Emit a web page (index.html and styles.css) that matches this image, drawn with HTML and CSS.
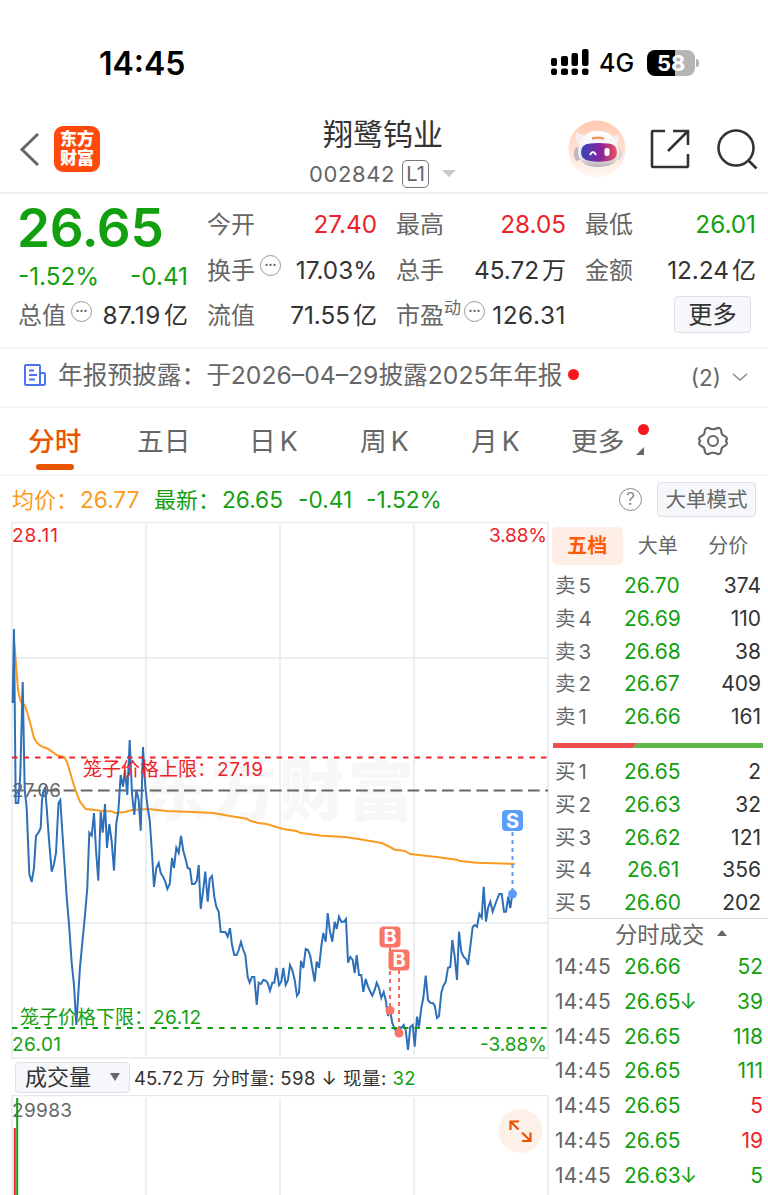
FILE: index.html
```html
<!DOCTYPE html>
<html lang="zh-CN">
<head>
    <meta charset="UTF-8">
    <title>翔鹭钨业</title>
    <link rel="stylesheet" href="styles.css">
</head>
<body>
    <!-- status bar -->
    <div class="status">
        <div class="clock">14:45</div>
        <svg class="signal" width="38" height="28" viewBox="0 0 38 28">
            <rect x="0" y="9" width="6" height="8" rx="2"/><rect x="10" y="7" width="7" height="10" rx="2"/><rect x="20.500" y="4" width="6.500" height="13" rx="2"/><rect x="31" y="0" width="6.500" height="17" rx="2"/>
            <rect x="0" y="19.500" width="6" height="6.500" rx="2"/><rect x="10" y="19.500" width="7" height="6.500" rx="2"/><rect x="20.500" y="19.500" width="6.500" height="6.500" rx="2"/><rect x="31" y="19.500" width="6.500" height="6.500" rx="2"/>
        </svg>
        <div class="net">4G</div>
        <div class="battery">58</div>
        <div class="battery-tip"></div>
    </div>

    <!-- header -->
    <div class="header">
        <svg class="back" width="22" height="36" viewBox="0 0 22 36"><path d="M20 3L4 18.500L20 34" fill="none" stroke="#666" stroke-width="3"/></svg>
        <div class="logo">东方<br>财富</div>
        <div class="stock">
            <div class="name">翔鹭钨业</div>
            <div class="code"><span>002842</span><span class="level">L1</span><i class="down"></i></div>
        </div>
        <svg class="robot" width="58" height="58" viewBox="0 0 58 58">
            <defs>
                <linearGradient id="skin" x1="0" y1="0" x2="0" y2="1"><stop offset="0" stop-color="#ffc9ae"/><stop offset="1" stop-color="#fff8f4"/></linearGradient>
                <linearGradient id="visor" x1="0" y1="0" x2="1" y2="0"><stop offset="0" stop-color="#3645b8"/><stop offset=".55" stop-color="#8a239a"/><stop offset="1" stop-color="#ef5360"/></linearGradient>
                <linearGradient id="helmet" x1="0" y1="0" x2="0" y2="1"><stop offset="0" stop-color="#fff"/><stop offset=".7" stop-color="#eeebed"/><stop offset="1" stop-color="#b9b0b6"/></linearGradient>
            </defs>
            <circle cx="29" cy="29" r="28.500" fill="url(#skin)"/>
            <ellipse cx="9.500" cy="34" rx="3.500" ry="7" fill="#bdb7be"/>
            <ellipse cx="51" cy="34" rx="3" ry="6" fill="#dcd6da"/>
            <path d="M8 11Q6 19 11 25L19 15Q11 16 8 11ZM50 13Q52 20 48 26L41 16Q48 18 50 13Z" fill="#f4eef0"/>
            <path d="M10 33C10 18 18 11 30 11S50 18 51 33C51 43 41 47 30 47S11 43 10 33Z" fill="url(#helmet)"/>
            <path d="M24 18.500Q30 17 36 18.500" fill="none" stroke="#e89b62" stroke-width="2.500"/>
            <path d="M13 32Q13 24 22 23.500Q30 22.500 40 23.500Q49 24 49 32T40 41Q30 42.500 22 41Q13 40 13 32Z" fill="url(#visor)"/>
            <path d="M22 35Q25 29 28 35" fill="none" stroke="#fff" stroke-width="2"/>
            <rect x="36.500" y="28" width="5" height="8" rx="2" fill="#fff"/>
        </svg>
        <svg class="share" width="42" height="42" viewBox="0 0 42 42" fill="none" stroke="#333" stroke-width="2.600">
            <path d="M16 3H4Q3 3 3 4V38Q3 39 4 39H37Q39 39 39 38V26M24 3H39V17M38.500 3.500L19 23"/>
        </svg>
        <svg class="search" width="42" height="42" viewBox="0 0 42 42" fill="none" stroke="#333" stroke-width="2.600">
            <circle cx="20" cy="20" r="17.500"/><path d="M32 32L40.500 40.500"/>
        </svg>
    </div>

    <!-- quote -->
    <div class="quote">
        <div class="price">26.65</div>
        <div class="cell"><span class="label">今开</span><span class="red">27.40</span></div>
        <div class="cell"><span class="label">最高</span><span class="red">28.05</span></div>
        <div class="cell"><span class="label">最低</span><span class="green">26.01</span></div>

        <div class="cell change green"><span>-1.52%</span><span>-0.41</span></div>
        <div class="cell"><span class="label">换手<i class="dots">•••</i></span><span>17.03%</span></div>
        <div class="cell"><span class="label">总手</span><span>45.72<b>万</b></span></div>
        <div class="cell"><span class="label">金额</span><span>12.24<b>亿</b></span></div>

        <div class="cell"><span class="label">总值<i class="dots">•••</i></span><span class="wide">87.19<b>亿</b></span></div>
        <div class="cell"><span class="label">流值</span><span>71.55<b>亿</b></span></div>
        <div class="cell"><span class="label">市盈<sup>动</sup><i class="dots tight">•••</i></span><span class="wide">126.31</span></div>
        <div class="cell last"><span class="more">更多</span></div>
    </div>

    <!-- notice -->
    <div class="notice">
        <svg width="24" height="24" viewBox="0 0 24 24" fill="none" stroke="#4a74f5" stroke-width="2">
            <path d="M17 22H3Q2 22 2 21V3Q2 2 3 2H16Q17 2 17 3V22H20.500Q22 22 22 20.500V11Q22 10 21 10H17M6 7.500H11M6 12H14M6 16.500H12"/>
        </svg>
        <span class="notice-text">年报预披露：于2026–04–29披露2025年年报</span>
        <i class="dot"></i>
        <span class="count">(2)</span>
        <svg class="arrow" width="18" height="12" viewBox="0 0 18 12"><path d="M2 3L9 9L16 3" fill="none" stroke="#888" stroke-width="1.500"/></svg>
    </div>

    <!-- period tabs -->
    <div class="tabs">
        <span class="tab active">分时</span>
        <span class="tab">五日</span>
        <span class="tab">日<em>K</em></span>
        <span class="tab">周<em>K</em></span>
        <span class="tab month">月<em>K</em></span>
        <span class="tab has-more">更多<i class="dot"></i><i class="corner"></i></span>
        <svg class="gear" width="32" height="32" viewBox="0 0 32 32" fill="none" stroke="#666" stroke-width="2.100" stroke-linejoin="round">
            <path d="M11.500 3Q16 5.500 20.500 3Q22.500 2.500 23.500 4Q24.500 5 24.300 7Q24.500 10 28 11.300Q30 12 30 14Q28 16 30 18Q30 20 28 20.700Q24.500 22 24.300 25Q24.500 27 23.500 28Q22.500 29.500 20.500 29Q16 26.500 11.500 29Q9.500 29.500 8.500 28Q7.500 27 7.700 25Q7.500 22 4 20.700Q2 20 2 18Q4 16 2 14Q2 12 4 11.300Q7.500 10 7.700 7Q7.500 5 8.500 4Q9.500 2.500 11.500 3Z"/>
            <circle cx="16" cy="16" r="5"/>
        </svg>
    </div>

    <div class="summary">
        <span class="orange key">均价：</span><span class="orange avg">26.77</span>
        <span class="green key">最新：</span><span class="green last-price">26.65</span>
        <span class="green diff">-0.41</span><span class="green">-1.52%</span>
        <span class="help">?</span>
        <span class="mode">大单模式</span>
    </div>

    <div class="main">
        <div class="left">
            <!-- minute chart -->
            <svg class="chart" width="549" height="537" viewBox="0 522 549 537">
                <text x="142" y="815" class="mark" textLength="272">东方财富</text>
                <path class="grid" d="M12 522.500H549M12 522V1058M12 658H549M12 923H549M146 525V1056M280 525V1056M414 525V1056M548 522V1058M12 1058H549"/>
                <path class="base" d="M12 790.500H548"/>
                <text x="12" y="797" class="t gray" textLength="49">27.06</text>
                <polyline class="avg-line" points="14,640 15.3,655 18,690 20.7,701.7 24.7,705 27.3,712.7 30.7,725 34,738 37.3,743 40.7,746 48.3,749 56.7,755 64.3,757 67.3,762.7 71.7,778 76,791.7 80,801.7 85.7,809 103.3,811 111.7,811.3 115,813 125,812 131.7,810 148.3,809 166.7,811 193.3,812 213.3,813 230,816 246.7,818.7 250,820.7 258.3,823 266.7,824 283,829 296.7,831 300,832.7 321.7,835.7 345,837 356.7,838.7 370,841 381.7,843 388,846 395,849.7 405,851 410,854 436.7,857 456.7,859.7 460,861 476.7,862.7 515,864"/>
                <polyline class="price-line" points="12.7,703 14,629 15.7,803 18.3,803 20.3,775 22.7,682 24.7,790 26.7,808 29.3,874 31.7,882 34,868 36,835.7 38.3,833 40.7,828 42,800 43.3,791 45,788 46.7,808 49,840 51.7,871.7 54,864 56,853 58.5,803 60.3,800 62,827 66.7,897 69.3,928 71.7,963 74,985 76.3,1025 80,967 85,915 87.3,888 89.3,832.7 91.7,835.7 94,813 96,850 98.3,880.7 100.7,811.7 102.7,832.7 105,804 107,848 109.3,824 111.7,841.7 114,870.7 116.3,823 118.3,811.7 120.7,775 123,786.7 125,770 127.3,795 129.7,740 132,794 134.3,815 136.3,790 138.7,800 140.7,830.7 143,747 145.3,786.7 147.7,808 149.7,820 152,853 154,887 156.3,868 158.7,863 160.7,873 163,876.7 165.3,881.7 167.3,889 169.7,884 172,858 174,868 176.3,847.7 178.7,853 181,836 183.3,850.7 185.3,858 187.7,868 190,869 192,884 194.3,884 196.7,881 198.7,865 200.7,909 203,891.7 205.3,871.7 207.7,901.7 209.7,879 212,876 214.3,896.7 216.3,906.7 218.7,911.7 220.7,932 225.3,932 227.7,936.7 230,928 232,945 234.3,955 236.7,955 238.7,950 241,942 243.3,950 245.3,955 247.7,977 249.7,982.7 252,977 254.3,977 256.7,1005 258.7,982.7 261,984 263.3,980 265.7,980.7 267.7,983 270,990.7 272.3,982.7 274.3,982.7 276.5,968 279,985 281.3,981.7 283.3,968 285.7,985 288,980 290,965 292.3,970 294.7,980 297,995.7 299,992.7 301,960.7 303.3,968 305.7,949 308,950 310.3,956 312.3,968 314.7,981.7 316.7,961.7 319,968 321.3,946.7 323.3,933 325.7,941.7 327.7,913 330,931.7 332.3,941.7 334.7,921.7 336.7,929 339,916.7 341.3,921.7 344,921.7 346,919 348,962.7 350.3,957 352.7,960 354.7,973 356.7,955 359,975 361.3,975 363.3,992 365.7,979 368,986.7 370.3,991.7 372.3,995.7 374.7,990 376.7,982.7 379,988 381.3,998 383.7,992 385.7,1000 388,1016 390,1010 392.3,1023 394.7,1029 396.7,1031.7 399,1027 401.3,1028 403.7,1025 405.7,1030 408,1050 410.3,1027 412.7,1025 414.7,1046.7 417,1016.7 419,1026.7 421.3,1008 423.3,998 425.7,975.7 428,1000 430.3,1002.7 432.7,1003 434.7,1005.7 437,1018 439,1016 441.3,993 443.3,986 445.7,982 448,967.7 450.3,967 452.3,940 454.7,956.7 457,980 459,931.7 461.3,951.7 463.7,957 466,959 468,965 470.3,946.7 472.7,927 474.7,925 477,926.7 479.3,914 481.7,917.7 483.7,886.7 486,921.7 488,908 490.3,901.7 492.7,911.7 495,905 499.3,894 501.7,894 504,911.7 506,911.7 508.3,896.7 510.3,908 512.3,894"/>
                <path class="cage-top" d="M12 757.500H548"/>
                <path class="cage-bottom" d="M12 1028H548"/>
                <text x="83" y="776" class="t red">笼子价格上限：</text><text x="217" y="776" class="t red" textLength="46">27.19</text>
                <text x="20" y="1024" class="t green">笼子价格下限：</text><text x="153" y="1024" class="t green" textLength="48">26.12</text>
                <text x="12" y="541.500" class="t red" textLength="46">28.11</text>
                <text x="489" y="541.500" class="t red" textLength="58">3.88%</text>
                <text x="12" y="1051" class="t green" textLength="49">26.01</text>
                <text x="480" y="1051" class="t green" textLength="67">-3.88%</text>

                <!-- trade marks -->
                <g class="buy">
                    <path d="M390 947V1010M399 970V1033"/>
                    <circle cx="390" cy="1010.500" r="4.500"/><circle cx="399" cy="1033" r="4.500"/>
                    <rect x="379.500" y="926.500" width="21" height="21" rx="4"/><text x="390" y="944">B</text>
                    <rect x="388.500" y="949.500" width="21" height="21" rx="4"/><text x="399" y="967">B</text>
                </g>
                <g class="sell">
                    <path d="M512.500 832V894"/><circle cx="512.500" cy="894" r="4.500"/>
                    <rect x="502" y="810" width="21" height="21" rx="4"/><text x="512.500" y="828">S</text>
                </g>
            </svg>

            <div class="volbar">
                <span class="select">成交量<i></i></span>
                <span class="vol">45.72<b>万</b></span>
                <span class="per">分时量: 598 ↓ 现量: <span class="green">32</span></span>
            </div>

            <svg class="volume" width="549" height="100" viewBox="0 1095 549 100">
                <path class="grid" d="M12 1095.500H549M12 1095V1195M146 1098V1195M280 1098V1195M414 1098V1195M548 1095V1195"/>
                <text x="12" y="1117" class="t gray" textLength="60">29983</text>
                <path d="M14.800 1128V1195" stroke="#f0212b" stroke-width="2"/>
                <path d="M17.200 1098V1195" stroke="#0f9f0f" stroke-width="2"/>
                <circle cx="520.500" cy="1131" r="22" fill="#fcf0e9"/>
                <path d="M519 1121.500H510.500V1130M511 1122L518.500 1129.500M522 1141H530.500V1132.500M522 1132.500L530 1140.500" fill="none" stroke="#ea5504" stroke-width="2.200"/>
            </svg>
        </div>

        <div class="right">
            <div class="side-tabs"><span class="on">五档</span><span>大单</span><span>分价</span></div>
            <div class="book">
                <div><span>卖<b>5</b></span><span>26.70</span><span>374</span></div>
                <div><span>卖<b>4</b></span><span>26.69</span><span>110</span></div>
                <div><span>卖<b>3</b></span><span>26.68</span><span>38</span></div>
                <div><span>卖<b>2</b></span><span>26.67</span><span>409</span></div>
                <div><span>卖<b>1</b></span><span>26.66</span><span>161</span></div>
            </div>
            <svg class="ratio" width="210" height="5" viewBox="0 0 210 5"><path d="M0 0H84L80 5H0Z" fill="#ee4d4d"/><path d="M84 0H210V5H80Z" fill="#5fb947"/></svg>
            <div class="book bids">
                <div><span>买<b>1</b></span><span>26.65</span><span>2</span></div>
                <div><span>买<b>2</b></span><span>26.63</span><span>32</span></div>
                <div><span>买<b>3</b></span><span>26.62</span><span>121</span></div>
                <div><span>买<b>4</b></span><span class="shift">26.61</span><span>356</span></div>
                <div><span>买<b>5</b></span><span>26.60</span><span>202</span></div>
            </div>
            <div class="deal-title">分时成交<i></i></div>
            <div class="deals">
                <div><span>14:45</span><span>26.66</span><span class="green">52</span></div>
                <div><span>14:45</span><span>26.65<u>↓</u></span><span class="green">39</span></div>
                <div><span>14:45</span><span>26.65</span><span class="green">118</span></div>
                <div><span>14:45</span><span>26.65</span><span class="green">111</span></div>
                <div><span>14:45</span><span>26.65</span><span class="red">5</span></div>
                <div><span>14:45</span><span>26.65</span><span class="red">19</span></div>
                <div><span>14:45</span><span>26.63<u>↓</u></span><span class="green">5</span></div>
            </div>
        </div>
    </div>
</body>
</html>
```
FILE: styles.css
```css
* {
    box-sizing: border-box;
}

body {
    margin: 0;
    width: 768px;
    height: 1195px;
    overflow: hidden;
    background: #fff;
    color: #333;
    font-family: Inter, "Noto Sans CJK SC", sans-serif;
    font-size: 24px;
    white-space: nowrap;
}

i, em, u {
    font-style: normal;
    text-decoration: none;
}

b {
    font-weight: normal;
}

.red { color: #ee2229; fill: #ee2229; }
.green { color: #12a010; fill: #12a010; }
.orange { color: #fb9a20; }
.gray { fill: #666; }

/* status bar */
.status {
    display: flex;
    align-items: center;
    height: 100px;
    padding: 26px 67px 0 99px;
    color: #000;
}

.clock {
    font-size: 32px;
    font-weight: 600;
    width: 452px;
}

.net {
    font-size: 25px;
    font-weight: 500;
    margin: 0 13px 0 10px;
}

.battery {
    width: 48px;
    height: 26px;
    border-radius: 8px;
    background: linear-gradient(to right, #000 58%, #b5b5b5 58%);
    color: #fff;
    font-size: 22px;
    font-weight: 700;
    line-height: 26px;
    text-align: center;
}

.battery-tip {
    width: 3px;
    height: 8px;
    margin-left: 1px;
    border-radius: 0 3px 3px 0;
    background: #b5b5b5;
}

/* header */
.header {
    display: flex;
    align-items: center;
    height: 94px;
    padding: 6px 10px 0 18px;
    border-bottom: 2px solid #eee;
}

.logo {
    width: 46px;
    height: 46px;
    margin-left: 14px;
    padding-top: 4px;
    border-radius: 9px;
    background: #ff4a0c;
    color: #fff;
    font-size: 17px;
    font-weight: 900;
    line-height: 19px;
    text-align: center;
}

.stock {
    flex: none;
    width: 339px;
    height: 87px;
    margin-left: 112px;
    padding-top: 5px;
}

.name {
    padding-left: 111px;
    font-size: 30px;
    line-height: 46px;
}

.code {
    display: flex;
    align-items: center;
    padding: 2px 0 0 97px;
    line-height: 30px;
    color: #666;
    font-size: 22px;
    letter-spacing: .6px;
}

.level {
    width: 27px;
    height: 28px;
    margin-left: 7px;
    border: 1.500px solid #777;
    border-radius: 5px;
    font-size: 20px;
    line-height: 26px;
    letter-spacing: 0;
    text-align: center;
}

.down {
    margin-left: 13px;
    border: 7px solid transparent;
    border-top-color: #c8c8c8;
    border-bottom: 0;
}

.robot { margin-left: 17px; flex: none; }
.share { margin-left: 23px; flex: none; }
.search { margin-left: 25px; flex: none; }

/* quote */
.quote {
    display: grid;
    grid-template-columns: 170px 170px 170px 171px;
    grid-template-rows: repeat(3, 45.5px);
    column-gap: 19px;
    height: 155px;
    padding: 8px 0 0 18px;
    border-bottom: 2px solid #f5f5f5;
    font-size: 24.300px;
}

.price {
    color: #12a010;
    font-size: 53px;
    font-weight: 600;
    line-height: 52px;
    letter-spacing: -.3px;
    margin-left: -1px;
}

.cell {
    display: flex;
    align-items: center;
    justify-content: space-between;
    line-height: 45px;
}

.cell b {
    margin-left: 3px;
    font-size: 24px;
}

.change { padding-top: 13px; }

.wide { letter-spacing: .6px; }
.wide b { letter-spacing: 0; }

.last { justify-content: flex-end; padding-right: 5px; }

.label {
    display: flex;
    align-items: center;
    color: #666;
    font-size: 24px;
}

.label sup {
    font-size: 17px;
    line-height: 20px;
    margin-top: -16px;
}

.dots {
    width: 21px;
    height: 21px;
    margin: -9px 0 0 5px;
    border: 1.500px solid #999;
    border-radius: 50%;
    font-size: 7px;
    line-height: 18px;
    text-align: center;
}

.tight { margin-left: 3px; }

.more {
    width: 77px;
    height: 37px;
    margin-top: -2px;
    border: 1px solid #dde0e5;
    border-radius: 4px;
    background: #f6f7fa;
    line-height: 34px;
    text-align: center;
}

/* notice */
.notice {
    display: flex;
    align-items: center;
    height: 59px;
    padding: 0 19px 6px 23px;
    border-bottom: 2px solid #f5f5f5;
    color: #666;
    font-size: 24.700px;
}

.notice-text { margin: -3px 0 0 11px; }

.dot {
    width: 11px;
    height: 11px;
    border-radius: 50%;
    background: #f8161d;
}

.notice .dot { margin-left: 5px; }

.count {
    margin: 5px 10px 0 auto;
    font-size: 22.500px;
}

.arrow { margin-top: 5px; }

/* period tabs */
.tabs {
    display: flex;
    height: 68px;
    border-bottom: 2px solid #f5f5f5;
    padding-left: 28px;
    color: #666;
    font-size: 26.700px;
    line-height: 67px;
}

.tab {
    position: relative;
    width: 111px;
}

.tab:nth-child(1) { width: 109px; }
.tab:nth-child(2) { width: 112px; }

.tab em { margin-left: 4px; }

.tab.active {
    color: #ea5504;
    font-weight: 500;
}

.tab.active::after {
    content: "";
    position: absolute;
    left: 8px;
    bottom: 4px;
    width: 38px;
    height: 6px;
    border-radius: 3px;
    background: #ea5504;
}

.tab.month { width: 100px; }

.tab.has-more { width: 126px; }

.has-more .dot {
    position: absolute;
    left: 67px;
    top: 16px;
}

.corner {
    position: absolute;
    left: 65px;
    top: 39px;
    border-left: 8px solid transparent;
    border-bottom: 8px solid #666;
}

.gear { margin-top: 17px; }

/* summary line */
.summary {
    display: flex;
    align-items: center;
    height: 46px;
    padding: 1px 12px 0 12px;
    font-size: 22.700px;
}

.key {
    width: 68px;
    margin-top: -4px;
    font-size: 22px;
}

.avg { width: 74px; }
.last-price { width: 76px; }
.diff { width: 68px; }

.help {
    width: 23px;
    height: 23px;
    margin-left: auto;
    border: 1.500px solid #888;
    border-radius: 50%;
    color: #888;
    font-size: 17px;
    line-height: 20px;
    text-align: center;
}

.mode {
    width: 99px;
    height: 35px;
    margin-left: 15px;
    border: 1px solid #dde0e5;
    border-radius: 4px;
    background: #f6f7fa;
    color: #666;
    font-size: 20.500px;
    line-height: 33px;
    text-align: center;
}

/* chart */
.main {
    display: flex;
}

.left {
    width: 549px;
    flex: none;
}

.left svg { display: block; }

.grid { fill: none; stroke: #e8e9ee; stroke-width: 1.500; }
.base { stroke: #666; stroke-width: 2; stroke-dasharray: 11.700 5.500; }
.avg-line { fill: none; stroke: #fb9a20; stroke-width: 2; }
.price-line { fill: none; stroke: #2e70b8; stroke-width: 2; }
.cage-top { stroke: #ee2229; stroke-width: 2; stroke-dasharray: 5.500 6; }
.cage-bottom { stroke: #12a010; stroke-width: 2; stroke-dasharray: 5.500 6; }
.t { font-size: 19px; }

.mark {
    font-size: 66px;
    font-weight: 900;
    fill: #f7f7f7;
}

.buy, .sell {
    fill: #fa7468;
    stroke-width: 2;
}

.buy path, .sell path { stroke: #f4695f; stroke-dasharray: 4 4; }
.sell { fill: #5b9ef9; }
.sell path { stroke: #5b9ef9; }

.buy text, .sell text {
    fill: #fff;
    font-size: 20px;
    font-weight: 700;
    text-anchor: middle;
}

.volbar {
    display: flex;
    align-items: center;
    height: 36px;
    padding-left: 15px;
    font-size: 18.500px;
}

.select {
    display: flex;
    align-items: center;
    width: 115px;
    height: 31px;
    padding-left: 9px;
    border: 1px solid #dde0e5;
    border-radius: 4px;
    background: #f6f7fa;
    font-size: 22px;
    line-height: 28px;
}

.select i {
    margin-left: 19px;
    border: 5px solid transparent;
    border-top: 8px solid #666;
    border-bottom: 0;
}

.vol { margin-left: 4px; }
.vol b { margin-left: 3px; }

.per {
    margin-left: 7px;
    letter-spacing: .45px;
}

/* order book */
.right {
    width: 219px;
    padding-top: 5px;
}

.side-tabs {
    display: flex;
    margin-left: 3px;
    height: 38px;
    color: #666;
    font-size: 20px;
    line-height: 39px;
}

.side-tabs span {
    width: 70.500px;
    text-align: center;
}

.side-tabs .on {
    border-radius: 5px;
    background: #feeee5;
    color: #ff5a0a;
    font-weight: 700;
}

.book {
    padding: 5px 7px 0 6px;
    font-size: 21px;
    line-height: 32.800px;
}

.book div, .deals div {
    display: grid;
    grid-template-columns: 69px 1fr 60px;
}

.book div span:first-child {
    color: #666;
    font-size: 20.500px;
}

.book div b { margin-left: 3px; }
.book div span:nth-child(2), .deals div span:nth-child(2) { color: #12a010; }
.book div span:last-child, .deals div span:last-child { text-align: right; }
.book .shift { padding-left: 3px; }

.ratio {
    display: block;
    margin: 9px 0 0 4px;
}

.bids {
    padding-top: 8px;
    height: 171px;
    border-bottom: 1.500px solid #ddd;
}

.deal-title {
    display: flex;
    align-items: center;
    height: 31px;
    padding: 0 0 3px 66px;
    color: #666;
    font-size: 22.300px;
}

.deal-title i {
    margin-left: 13px;
    border: 5px solid transparent;
    border-bottom: 6px solid #666;
    border-top: 0;
}

.deals {
    padding: 0 5px 0 6px;
    color: #666;
    font-size: 21px;
    line-height: 34.800px;
}

.deals u { margin-left: -1px; }
.deals div span:first-child { letter-spacing: .3px; }
```
